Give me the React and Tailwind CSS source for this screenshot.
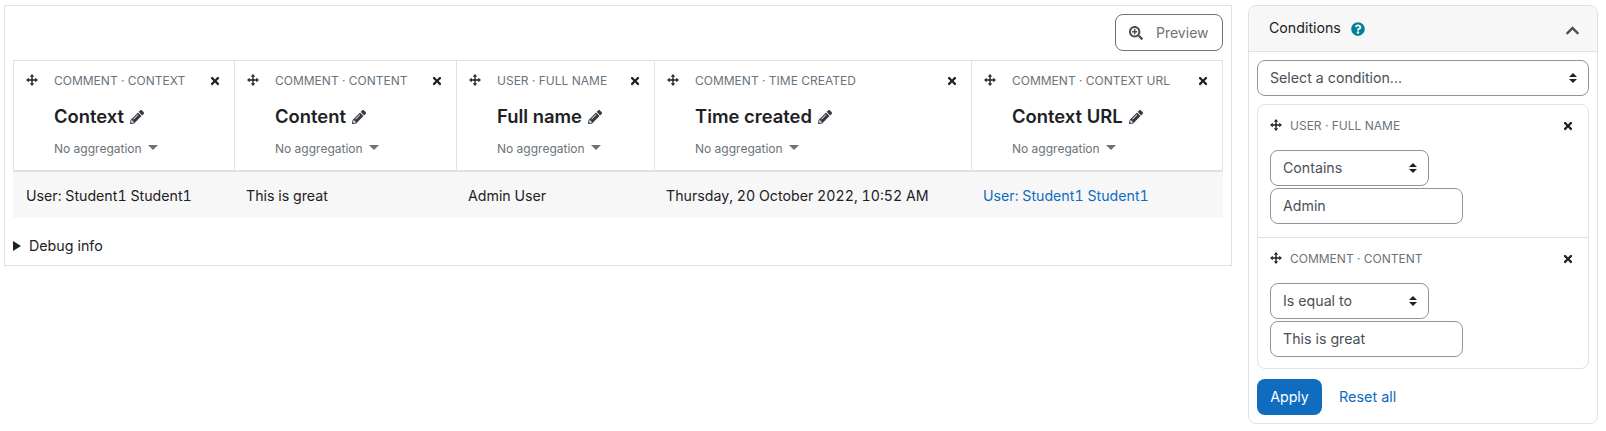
import React from "react";
import { FaPencilAlt, FaTimes, FaSearchPlus, FaQuestionCircle, FaChevronUp } from "react-icons/fa";

const columns = [
  { width: "w-[220px]", source: "COMMENT · CONTEXT", title: "Context", cell: "User: Student1 Student1" },
  { width: "w-[222px]", source: "COMMENT · CONTENT", title: "Content", cell: "This is great" },
  { width: "w-[198px]", source: "USER · FULL NAME", title: "Full name", cell: "Admin User" },
  { width: "w-[317px]", source: "COMMENT · TIME CREATED", title: "Time created", cell: "Thursday, 20 October 2022, 10:52 AM" },
  { width: "flex-1", source: "COMMENT · CONTEXT URL", title: "Context URL", cell: "User: Student1 Student1", link: true },
];

const SelectArrows = () => (
  <svg width="8" height="10" viewBox="0 0 8 10" className="fill-[#1d2125]">
    <path d="M0 4 L4 0 L8 4 Z" />
    <path d="M0 6 L4 10 L8 6 Z" />
  </svg>
);

// thin cross with triangle heads
const MoveIcon = () => (
  <svg width="12" height="12" viewBox="0 0 12 12" className="fill-[#1d2125] shrink-0 mb-[2px]">
    <path d="M5.3 2.5 H6.7 V5.3 H9.5 V6.7 H6.7 V9.5 H5.3 V6.7 H2.5 V5.3 H5.3 Z" />
    <path d="M6 0 L8.2 2.8 H3.8 Z" />
    <path d="M6 12 L8.2 9.2 H3.8 Z" />
    <path d="M0 6 L2.8 3.8 V8.2 Z" />
    <path d="M12 6 L9.2 3.8 V8.2 Z" />
  </svg>
);

const Condition = ({ source, operator, value, last }) => (
  <div className={`h-[133px] pl-[12px] pr-[14px] ${last ? "" : "border-b border-[#dee2e6]"}`}>
    <div className="flex items-center h-[42px]">
      <MoveIcon />
      <span className="ml-2 text-[12px] text-[#6a737b]">{source}</span>
      <FaTimes className="ml-auto text-[12px] text-[#1d2125]" />
    </div>
    <div className="mt-[3px] w-[159px] h-[36px] border border-[#8f959e] rounded-lg flex items-center justify-between pl-[12px] pr-[11px] text-[14.2px] text-[#495057]">
      {operator}
      <SelectArrows />
    </div>
    <div className="mt-[2px] w-[193px] h-[36px] border border-[#8f959e] rounded-lg flex items-center pl-[12px] text-[14.2px] text-[#495057]">
      {value}
    </div>
  </div>
);

export default function App() {
  return (
    <div className="w-[1606px] h-[431px] bg-white flex items-start font-['Inter',sans-serif] text-[#1d2125] pl-1 pt-[5px]">
      <div className="w-[1228px] h-[261px] border border-[#dee2e6] px-2 pt-2">
        <div className="flex justify-end">
          <button className="h-[37px] w-[108px] border border-[#6a737b] rounded-lg flex items-center pl-[13px] gap-[13px] text-[14px] text-[#6a737b]">
            <FaSearchPlus className="text-[14px] text-[#495057]" />
            Preview
          </button>
        </div>
        <div className="mt-[9px] flex border border-[#dee2e6] border-b-2 h-[112px]">
          {columns.map((col, i) => (
            <div key={col.title} className={`${col.width} pl-3 ${i > 0 ? "border-l border-[#dee2e6]" : ""}`}>
              <div className="flex items-center h-[40px]">
                <MoveIcon />
                <span className="ml-[16px] text-[12px] text-[#6a737b] whitespace-nowrap">{col.source}</span>
                <FaTimes className="ml-auto mr-[13px] text-[12px] text-[#1d2125]" />
              </div>
              <div className="pl-[28px] mt-[3px] flex items-center gap-[6px] h-[26px]">
                <span className="text-[18.4px] font-semibold">{col.title}</span>
                <FaPencilAlt className="text-[14px] text-[#343a40]" />
              </div>
              <div className="pl-[28px] mt-[9px] flex items-center gap-[6px] text-[12px] text-[#6a737b] h-[20px]">
                No aggregation
                <span className="w-0 h-0 border-x-[5px] border-x-transparent border-t-[5px] border-t-[#6a737b] mb-[3px]" />
              </div>
            </div>
          ))}
        </div>
        <div className="flex h-[46px] px-[1px] pt-[2px] bg-[#f7f7f7] items-center text-[14.2px] tabular-nums">
          {columns.map((col) => (
            <div key={col.title} className={`${col.width} pl-3 whitespace-nowrap ${col.link ? "text-[#0f6cbf]" : ""}`}>
              {col.cell}
            </div>
          ))}
        </div>
        <div className="mt-[17px] flex items-center gap-2 text-[14.25px]">
          <span className="w-0 h-0 border-y-[5px] border-y-transparent border-l-[8px] border-l-[#1d2125]" />
          Debug info
        </div>
      </div>
      <div className="ml-[16px] w-[350px] h-[419px] border border-[#dee2e6] rounded-lg overflow-hidden">
        <div className="h-[46px] bg-[#f7f7f7] border-b border-[#dee2e6] flex items-center pl-[20px] pr-[17px]">
          <span className="text-[14.2px] mb-[2px]">Conditions</span>
          <FaQuestionCircle className="ml-[10px] text-[14px] text-[#008196]" />
          <FaChevronUp className="ml-auto mt-[3px] text-[15px] text-[#495057]" />
        </div>
        <div className="px-2 pt-2">
          <div className="h-[36px] border border-[#8f959e] rounded-lg flex items-center justify-between pl-[12px] pr-[11px] text-[14.2px] text-[#495057]">
            Select a condition...
            <SelectArrows />
          </div>
          <div className="mt-2 border border-[#dee2e6] rounded-lg h-[265px]">
            <Condition source="USER · FULL NAME" operator="Contains" value="Admin" />
            <Condition source="COMMENT · CONTENT" operator="Is equal to" value="This is great" last />
          </div>
          <div className="mt-[10px] flex items-center">
            <button className="h-[36px] w-[65px] rounded-lg bg-[#0f6cbf] text-white text-[14.2px]">Apply</button>
            <span className="ml-[17px] text-[14.4px] text-[#0f6cbf]">Reset all</span>
          </div>
        </div>
      </div>
    </div>
  );
}
